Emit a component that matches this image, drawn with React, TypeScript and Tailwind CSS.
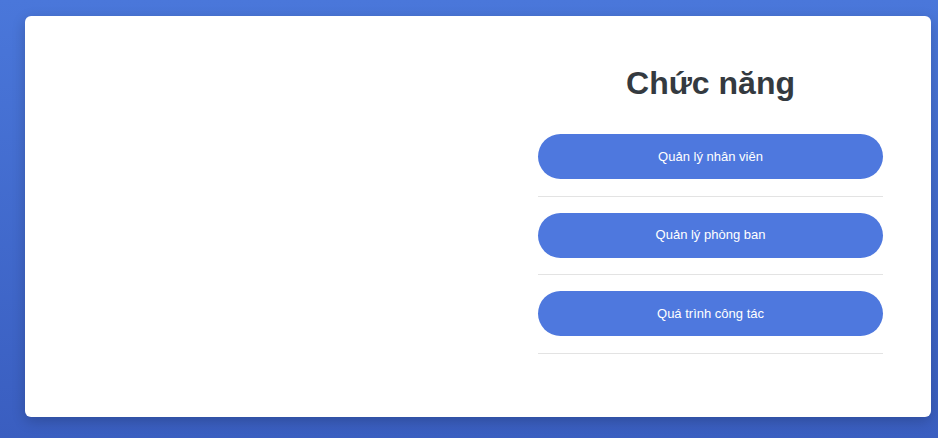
import React from 'react';

const ACTIONS = ['Quản lý nhân viên', 'Quản lý phòng ban', 'Quá trình công tác'];

export default function App() {
    return (
        <div className="w-[938px] h-[438px] overflow-hidden bg-gradient-to-b from-[#4a77da] to-[#3a5ec0] font-['Liberation_Sans',Arial,sans-serif]">
            <div className="ml-[25px] mt-[16px] w-[906px] h-[401px] bg-white rounded-md shadow-[0_4px_14px_rgba(0,0,0,0.2)] flex justify-end pr-[48px] pt-[48px]">
                <div className="w-[345px] flex flex-col">
                    <h1 className="text-[32px] leading-[38px] font-bold text-[#343a40] text-center mb-[32px]">
                        Chức năng
                    </h1>
                    {ACTIONS.map((label) => (
                        <div key={label} className="pb-[16.5px] mb-[16px] border-b border-[#e3e3e3]">
                            <button className="w-full h-[45px] rounded-full bg-[#4e78de] text-white text-[13px]">
                                {label}
                            </button>
                        </div>
                    ))}
                </div>
            </div>
        </div>
    );
}
